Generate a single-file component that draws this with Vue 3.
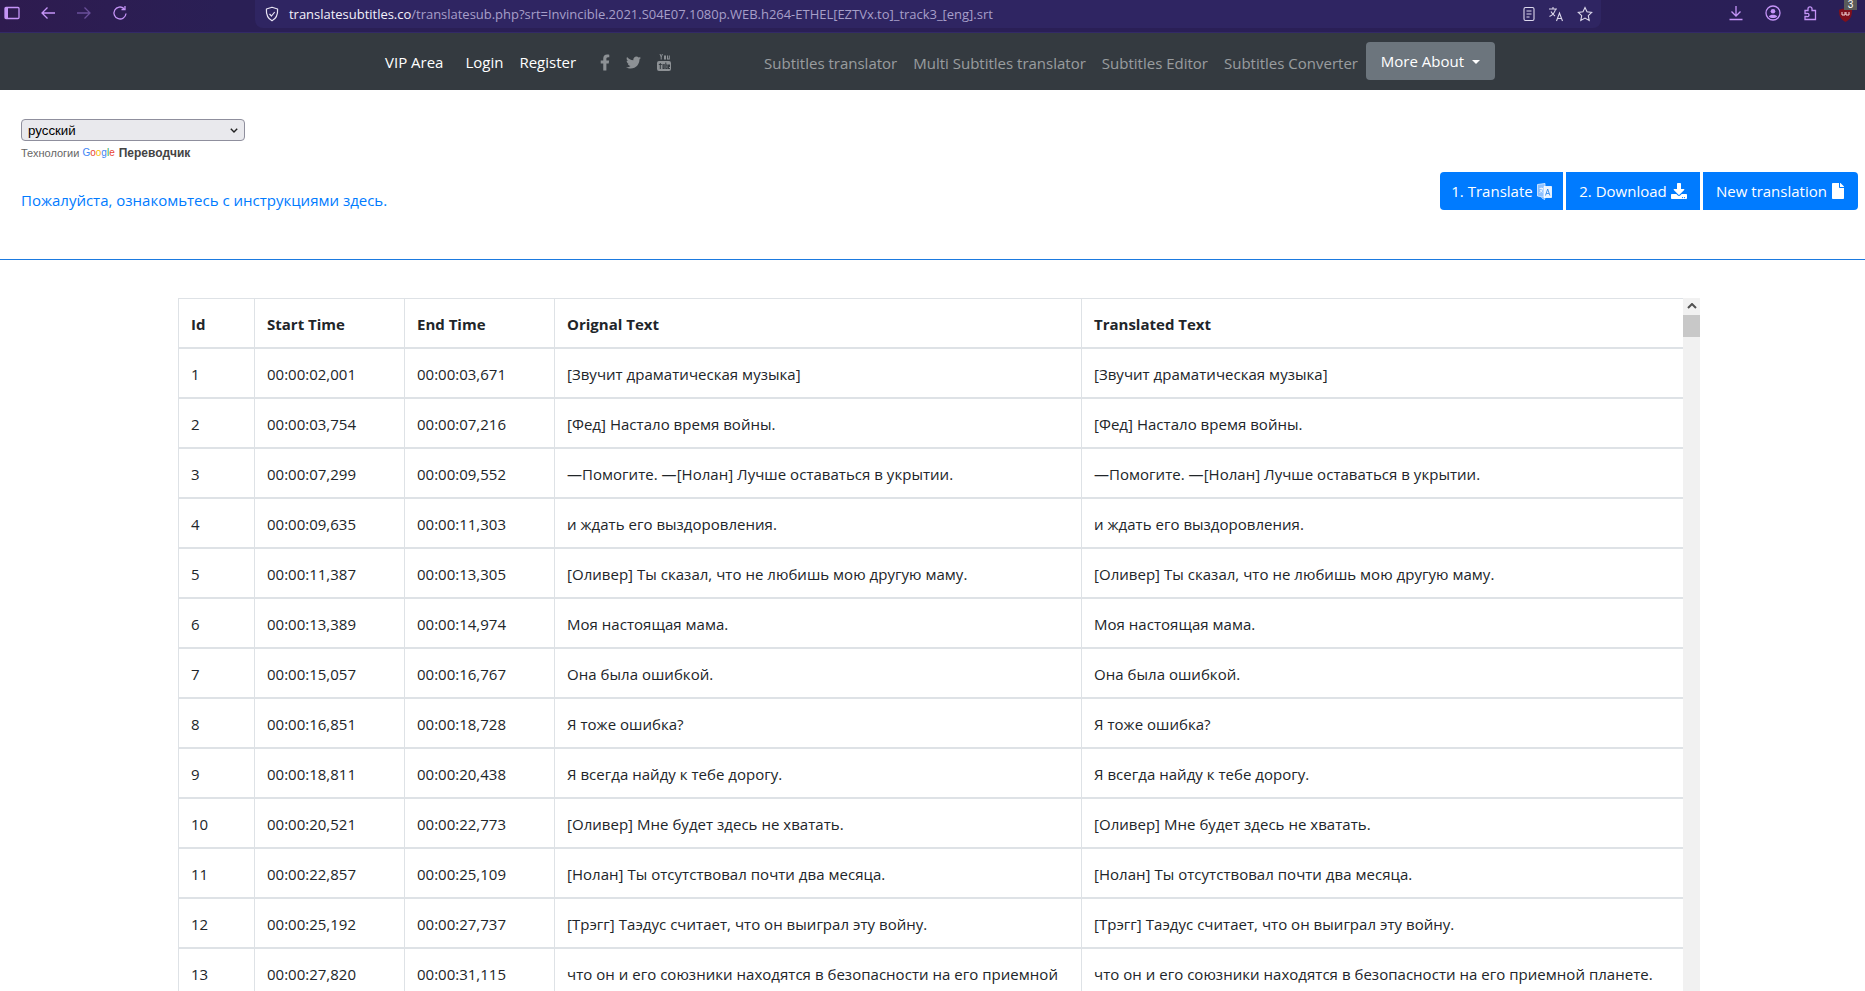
<template>
  <div class="page">
    <!-- browser toolbar -->
    <div class="toolbar">
      <svg class="tb-ic sidebar" viewBox="0 0 16 16"><rect x="1" y="2.500" width="14" height="11" rx="1" /><rect x="1" y="3" width="3" height="10" class="solid" /></svg>
      <svg class="tb-ic nav-ic" viewBox="0 0 16 16"><path d="M15 8H2M7.500 2.500 2 8l5.500 5.500" /></svg>
      <svg class="tb-ic nav-ic fwd" viewBox="0 0 16 16"><path d="M1 8h13M8.500 2.500 14 8l-5.500 5.500" /></svg>
      <svg class="tb-ic nav-ic" viewBox="0 0 16 16"><path d="M14 8.500a6 6 0 1 1-2-5M13 1v3.500H9.500" /></svg>
      <div class="urlbar">
        <svg class="shield" viewBox="0 0 16 16"><path d="M8 1.200 13.600 3c.3 5-1.300 9.500-5.600 11.800C3.700 12.500 2.100 8 2.400 3z" /><path d="m5.500 8 2 2 3.200-4" /></svg>
        <span class="url"><b>translatesubtitles.co</b>/translatesub.php?srt=Invincible.2021.S04E07.1080p.WEB.h264-ETHEL[EZTVx.to]_track3_[eng].srt</span>
        <div class="url-icons">
          <svg class="w-ic" viewBox="0 0 16 16"><rect x="3" y="1.500" width="10" height="13" rx="1.500" /><path d="M5.500 5h5M5.500 8h5M5.500 11h3" /></svg>
          <svg class="w-ic tr" viewBox="0 0 16 16"><path d="M1 3h8M5 1v2M7.500 3C7 6.500 4.500 9 1.500 10.500M3 5.500c1 2 2.500 3.500 4 4.500M8.500 15l3-8 3 8M9.500 12.500h4" /></svg>
          <svg class="w-ic" viewBox="0 0 16 16"><path d="m8 1.500 2 4.300 4.700.6-3.400 3.300.9 4.700L8 12.100l-4.200 2.300.9-4.700L1.300 6.400 6 5.800z" /></svg>
        </div>
      </div>
      <div class="ext">
        <svg class="tb-ic" viewBox="0 0 16 16"><path d="M8 1v10M3.500 6.500 8 11l4.500-4.500M1.500 14.500h13" /></svg>
        <svg class="tb-ic" viewBox="0 0 16 16"><circle cx="8" cy="8" r="7" /><circle cx="8" cy="6.300" r="2.300" class="solid" /><path d="M3.800 11.500c1-2.200 7.400-2.200 8.400 0-2 2-6.400 2-8.400 0z" class="solid" /></svg>
        <svg class="tb-ic" viewBox="0 0 16 16"><path d="M3 14.500h10.500V5.500H10V3.800a2 2 0 1 0-4 0v1.700H3v3h1.500a1.700 1.700 0 1 1 0 3H3z" /></svg>
        <span class="ublock">
          <svg viewBox="0 0 13 14"><path d="M6.500 0 13 1.800c.2 6-1.500 9.800-6.500 12.200C1.500 11.600-.2 7.800 0 1.800z" /><path class="u" d="M3 4v3h3V4M7 4v3h3V4" /></svg>
          <i>3</i>
        </span>
      </div>
    </div>

    <!-- site navbar -->
    <nav class="navbar">
      <a class="lnk">VIP Area</a>
      <a class="lnk login">Login</a>
      <a class="lnk register">Register</a>
      <span class="social">
        <svg class="fb" viewBox="0 0 320 512"><path d="M279.140 288l14.220-92.660h-88.910v-60.130c0-25.350 12.420-50.060 52.240-50.060h40.420V6.260S260.430 0 225.360 0c-73.220 0-121.080 44.380-121.080 124.720v70.620H22.890V288h81.390v224h100.170V288z" /></svg>
        <svg class="tw" viewBox="0 0 512 512"><path d="M459.370 151.716c.325 4.548.325 9.097.325 13.645 0 138.720-105.583 298.558-298.558 298.558-59.452 0-114.680-17.219-161.137-47.106 8.447.974 16.568 1.299 25.340 1.299 49.055 0 94.213-16.568 130.274-44.832-46.132-.975-84.792-31.188-98.112-72.772 6.498.974 12.995 1.624 19.818 1.624 9.421 0 18.843-1.300 27.614-3.573-48.081-9.747-84.143-51.980-84.143-102.985v-1.299c13.969 7.797 30.214 12.670 47.431 13.319-28.264-18.843-46.781-51.005-46.781-87.391 0-19.492 5.197-37.360 14.294-52.954 51.655 63.675 129.300 105.258 216.365 109.807-1.624-7.797-2.599-15.918-2.599-24.040 0-57.828 46.782-104.934 104.934-104.934 30.213 0 57.502 12.670 76.670 33.137 23.715-4.548 46.456-13.320 66.599-25.340-7.798 24.366-24.366 44.833-46.132 57.827 21.117-2.273 41.584-8.122 60.426-16.243-14.292 20.791-32.161 39.308-52.628 54.253z" /></svg>
        <svg class="yt" viewBox="0 0 14 17">
          <path d="M2.500 0h1l.7 2 .7-2h1L4.700 3v2.500h-1V3zM7 1.500h2v4H7zM10 1.500h1v3h.8v-3h1v4H10z" />
          <path fill-rule="evenodd" d="M2 7h10a2 2 0 0 1 2 2v6a2 2 0 0 1-2 2H2a2 2 0 0 1-2-2V9a2 2 0 0 1 2-2zm.8 2v1h-1v1h1v4h1v-4h1v-1h-1V9zm2.700 1v5h2.200v-5h-1v4h-.2v-4zm2.800-1.500V15h2.400v-4.500H9.300v-2zm1 3h.4V14h-.4zM11 10.500V15h2v-1h-1v-1h1v-2.500z" />
        </svg>
      </span>
      <a class="lnk muted t1">Subtitles translator</a>
      <a class="lnk muted t2">Multi Subtitles translator</a>
      <a class="lnk muted t3">Subtitles Editor</a>
      <a class="lnk muted t4">Subtitles Converter</a>
      <button class="more">More About<span class="caret"></span></button>
    </nav>

    <section class="top">
      <div>
        <div class="lang-box">
          <select class="lang"><option>русский</option></select>
          <svg class="chevron" viewBox="0 0 8 5"><path d="M.8.8 4 4 7.200.8" /></svg>
        </div>
        <div class="credit">
          Технологии
          <span class="google"><i class="b">G</i><i class="r">o</i><i class="y">o</i><i class="b">g</i><i class="g">l</i><i class="r">e</i></span>
          <b>Переводчик</b>
        </div>
        <a class="help">Пожалуйста, ознакомьтесь с инструкциями здесь.</a>
      </div>
      <div class="actions">
        <button class="btn b1">1. Translate
          <svg class="ic-lang" viewBox="0 0 15 17">
            <path d="M.5 1.500 8 .5v14L.5 13z" class="pg" />
            <path d="M7 3.500h7.500v11H7z" class="pw" />
            <path d="M8.500 12.500l2.200-6.500 2.200 6.500M9.300 10.500h2.800" class="ink" />
            <path d="M2.500 5.500h3.500M4.200 4.500v1M5.500 5.500c-.3 2-1.500 3.300-3 4M3.300 7c.5 1 1.300 1.800 2.200 2.300" class="lt" />
            <path d="M4.500 14.500 7.500 16.500 8 14.500" class="lt" />
          </svg>
        </button>
        <button class="btn b2">2. Download
          <svg class="ic" viewBox="0 0 512 512"><path d="M216 0h80c13.300 0 24 10.700 24 24v168h87.700c17.800 0 26.700 21.500 14.100 34.100L269.700 378.300c-7.500 7.500-19.800 7.500-27.300 0L90.100 226.100c-12.600-12.600-3.700-34.100 14.100-34.100H192V24c0-13.300 10.700-24 24-24zm296 376v112c0 13.300-10.700 24-24 24H24c-13.300 0-24-10.700-24-24V376c0-13.300 10.700-24 24-24h146.700l49 49c20.100 20.100 52.500 20.100 72.600 0l49-49H488c13.300 0 24 10.700 24 24zm-124 88c0-11-9-20-20-20s-20 9-20 20 9 20 20 20 20-9 20-20zm64 0c0-11-9-20-20-20s-20 9-20 20 9 20 20 20 20-9 20-20z" /></svg>
        </button>
        <button class="btn b3">New translation
          <svg class="ic file" viewBox="0 0 384 512"><path d="M224 136V0H24C10.700 0 0 10.700 0 24v464c0 13.300 10.700 24 24 24h336c13.300 0 24-10.700 24-24V160H248c-13.200 0-24-10.800-24-24zm160-14.100v6.100H256V0h6.100c6.400 0 12.500 2.500 17 7l97.900 98c4.500 4.500 7 10.600 7 16.900z" /></svg>
        </button>
      </div>
    </section>

    <div class="table-wrap">
      <table>
        <colgroup>
          <col class="c-id" />
          <col class="c-time" />
          <col class="c-time" />
          <col class="c-orig" />
          <col class="c-tr" />
        </colgroup>
        <thead>
          <tr>
            <th>Id</th>
            <th>Start Time</th>
            <th>End Time</th>
            <th>Orignal Text</th>
            <th>Translated Text</th>
          </tr>
        </thead>
        <tbody>
          <tr v-for="r in rows" :key="r[0]">
            <td>{{ r[0] }}</td>
            <td>{{ r[1] }}</td>
            <td>{{ r[2] }}</td>
            <td>{{ r[3] }}</td>
            <td>{{ r[3] }}</td>
          </tr>
        </tbody>
      </table>
      <div class="scrollbar">
        <svg class="up" viewBox="0 0 10 6"><path d="M1 5l4-4 4 4" /></svg>
        <div class="thumb"></div>
      </div>
    </div>
  </div>
</template>

<script setup>
const rows = [
  [1, '00:00:02,001', '00:00:03,671', '[Звучит драматическая музыка]'],
  [2, '00:00:03,754', '00:00:07,216', '[Фед] Настало время войны.'],
  [3, '00:00:07,299', '00:00:09,552', '—Помогите. —[Нолан] Лучше оставаться в укрытии.'],
  [4, '00:00:09,635', '00:00:11,303', 'и ждать его выздоровления.'],
  [5, '00:00:11,387', '00:00:13,305', '[Оливер] Ты сказал, что не любишь мою другую маму.'],
  [6, '00:00:13,389', '00:00:14,974', 'Моя настоящая мама.'],
  [7, '00:00:15,057', '00:00:16,767', 'Она была ошибкой.'],
  [8, '00:00:16,851', '00:00:18,728', 'Я тоже ошибка?'],
  [9, '00:00:18,811', '00:00:20,438', 'Я всегда найду к тебе дорогу.'],
  [10, '00:00:20,521', '00:00:22,773', '[Оливер] Мне будет здесь не хватать.'],
  [11, '00:00:22,857', '00:00:25,109', '[Нолан] Ты отсутствовал почти два месяца.'],
  [12, '00:00:25,192', '00:00:27,737', '[Трэгг] Таэдус считает, что он выиграл эту войну.'],
  [13, '00:00:27,820', '00:00:31,115', 'что он и его союзники находятся в безопасности на его приемной планете.']
]
</script>

<style>
html,
body {
  margin: 0;
  height: 991px;
  overflow: hidden;
  background: #fff;
}
</style>

<style scoped>
.page {
  font-family: 'Open Sans', 'Noto Sans', sans-serif;
  font-size: 15px;
  line-height: 24px;
  color: #212529;
}
.toolbar {
  height: 33px;
  box-sizing: border-box;
  display: flex;
  align-items: flex-start;
  background: linear-gradient(90deg, #2e1b4f, #2a1f55 220px, #2a1f57);
  border-bottom: 1px solid #322a66;
}
.tb-ic {
  width: 16px;
  height: 16px;
  margin-top: 5px;
  fill: none;
  stroke: #c594f7;
  stroke-width: 1.300;
}
.tb-ic .solid {
  fill: #c594f7;
  stroke: none;
}
.sidebar {
  margin-left: 4px;
}
.nav-ic {
  margin-left: 20px;
}
.fwd {
  stroke: #6a4f9a;
}
.urlbar {
  width: 1346px;
  height: 28px;
  margin-left: 127px;
  box-sizing: border-box;
  padding: 0 8px 1px 9px;
  background: #2f2562;
  border-radius: 0 0 8px 8px;
  display: flex;
  align-items: center;
}
.shield {
  width: 16px;
  height: 16px;
  fill: none;
  stroke: #e8e4f4;
  stroke-width: 1.200;
  stroke-linejoin: round;
}
.url {
  margin-left: 9px;
  font: 13px/18px 'Open Sans', sans-serif;
  color: #a79fc9;
  letter-spacing: -0.02px;
  white-space: nowrap;
}
.url b {
  font-weight: 400;
  color: #f3f1fa;
}
.url-icons {
  margin-left: auto;
  display: flex;
}
.w-ic {
  width: 16px;
  height: 16px;
  fill: none;
  stroke: #dcd8ec;
  stroke-width: 1.100;
}
.w-ic.tr {
  margin: 0 13px 0 11px;
}
.ext {
  display: flex;
  margin-left: 127px;
  gap: 21px;
}
.ublock {
  position: relative;
  width: 13px;
  height: 14px;
  margin-top: 8px;
}
.ublock svg {
  display: block;
  width: 13px;
  height: 14px;
  fill: #800f1b;
}
.ublock .u {
  fill: none;
  stroke: #f4d9dc;
  stroke-width: 1;
}
.ublock i {
  position: absolute;
  top: -8px;
  left: 5px;
  width: 13px;
  height: 10px;
  text-align: center;
  background: #5a5a5a;
  color: #fff;
  font: 10px/10px 'Liberation Sans', sans-serif;
}
.navbar {
  height: 57px;
  background: #343a40;
  display: flex;
  align-items: center;
  padding-left: 385px;
}
.lnk {
  color: #fff;
  white-space: nowrap;
  margin-top: 1px;
}
.muted {
  color: rgba(255, 255, 255, 0.5);
  margin-top: 3px;
}
.login {
  margin-left: 22px;
}
.register {
  margin-left: 16px;
}
.social {
  display: flex;
  align-items: center;
  fill: #8d9195;
  margin: 2px 0 0 24px;
}
.fb {
  width: 10px;
  height: 17px;
}
.tw {
  width: 15px;
  height: 15px;
  margin-left: 16px;
}
.yt {
  width: 14px;
  height: 17px;
  margin-left: 16px;
}
.t1 {
  margin-left: 93px;
}
.t2,
.t3,
.t4 {
  margin-left: 16px;
}
.more {
  margin-left: 8px;
  width: 129px;
  height: 38px;
  margin-top: -1px;
  border: 0;
  border-radius: 4px;
  background: #6c757d;
  color: #fff;
  font: inherit;
  padding: 0;
}
.caret {
  display: inline-block;
  margin-left: 8px;
  vertical-align: 3px;
  border-top: 4.800px solid #fff;
  border-left: 4.800px solid transparent;
  border-right: 4.800px solid transparent;
}
.top {
  height: 170px;
  box-sizing: border-box;
  padding: 29px 7px 0 21px;
  border-bottom: 1px solid #1b7ae0;
  display: flex;
  justify-content: space-between;
}
.lang-box {
  position: relative;
  width: 224px;
  height: 22px;
}
.lang {
  appearance: none;
  display: block;
  width: 224px;
  height: 22px;
  padding: 0 0 0 6px;
  box-sizing: border-box;
  font: 13.300px 'Liberation Sans', Arial, sans-serif;
  color: #000;
  background: #e9e9ed;
  border: 1px solid #8f8f9d;
  border-radius: 4px;
}
.chevron {
  position: absolute;
  top: 9px;
  left: 209px;
  width: 8px;
  height: 5px;
  fill: none;
  stroke: #222;
  stroke-width: 1.400;
  pointer-events: none;
}
.credit {
  margin-top: 2px;
  font: 11px/20px 'Liberation Sans', Arial, sans-serif;
  color: #666;
  white-space: nowrap;
}
.credit b {
  color: #444;
  font-size: 12px;
  margin-left: 4px;
}
.google {
  font-size: 10px;
  vertical-align: 1px;
}
.google i {
  font-style: normal;
}
.b {
  color: #4285f4;
}
.r {
  color: #ea4335;
}
.y {
  color: #fbbc05;
}
.g {
  color: #34a853;
}
.help {
  display: block;
  margin-top: 25px;
  color: #007bff;
}
.actions {
  display: flex;
  gap: 3px;
  margin-top: 53px;
  height: 38px;
}
.btn {
  height: 38px;
  border: 0;
  background: #007bff;
  color: #fff;
  font: inherit;
  padding: 0;
  white-space: nowrap;
  display: flex;
  align-items: center;
  justify-content: center;
  gap: 4px;
}
.b1 {
  width: 123px;
  border-radius: 4px 0 0 4px;
}
.b2 {
  width: 134px;
}
.b3 {
  width: 155px;
  border-radius: 0 4px 4px 0;
}
.ic {
  width: 16px;
  height: 16px;
  fill: #fff;
}
.ic.file {
  width: 14px;
  height: 16px;
}
.ic-lang {
  width: 15px;
  height: 17px;
  fill: none;
  stroke-width: 0.800;
}
.pg {
  fill: #8cc0ff;
  stroke: #e6f1ff;
}
.pw {
  fill: #eaf3ff;
  stroke: #fff;
}
.ink {
  stroke: #1d7fe8;
}
.lt {
  stroke: #fff;
}
.table-wrap {
  margin: 38px 0 0 178px;
  width: 1523px;
  display: flex;
  align-items: flex-start;
}
table {
  table-layout: fixed;
  width: 1505px;
  border-collapse: collapse;
  flex: none;
}
.c-id {
  width: 76px;
}
.c-time {
  width: 150px;
}
.c-orig {
  width: 527px;
}
.c-tr {
  width: 602px;
}
th,
td {
  box-sizing: border-box;
  height: 50px;
  padding: 13px 12px 11px;
  text-align: left;
  vertical-align: top;
  border: 1px solid #dee2e6;
  border-bottom-width: 2px;
}
td:nth-child(n + 4) {
  letter-spacing: 0.03px;
}
th {
  height: 49px;
  font-weight: 700;
}
.scrollbar {
  flex: none;
  width: 17px;
  height: 700px;
  margin-left: -1px;
  background: #f1f1f1;
}
.up {
  display: block;
  width: 10px;
  height: 6px;
  margin: 5px auto 0;
  fill: none;
  stroke: #505050;
  stroke-width: 2;
}
.thumb {
  margin-top: 6px;
  height: 22px;
  background: #c8c8c8;
}
</style>
